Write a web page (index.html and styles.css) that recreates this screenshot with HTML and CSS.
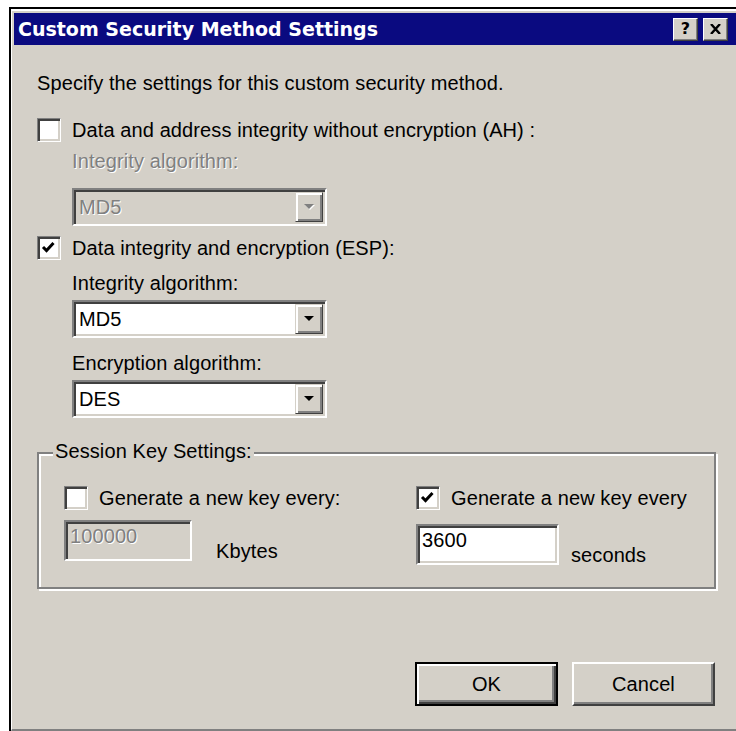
FILE: index.html
```html
<!DOCTYPE html>
<html lang="en">
<head>
<meta charset="utf-8">
<title>Custom Security Method Settings</title>
<link rel="stylesheet" href="styles.css">
</head>
<body>
<div class="window">
  <div class="frame">
    <div class="titlebar">
      <span class="title">Custom Security Method Settings</span>
      <div class="caption-buttons">
        <span class="cap-btn cap-help">?</span>
        <span class="cap-btn">
          <svg class="cap-close" width="11" height="10" viewBox="0 0 11 10"><path d="M1 0 L10 10 M10 0 L1 10" stroke="#000" stroke-width="2.4" fill="none"/></svg>
        </span>
      </div>
    </div>

    <div class="content">
      <p class="intro">Specify the settings for this custom security method.</p>

      <div class="check-row row-ah">
        <span class="checkbox"></span>
        <span>Data and address integrity without encryption (AH) :</span>
      </div>
      <div class="indent">
        <div class="label disabled label-ah">Integrity algorithm:</div>
        <div class="combo disabled combo-ah">
          <span class="combo-value">MD5</span>
          <span class="drop-btn"><svg width="10" height="6" viewBox="0 0 10 6"><polygon points="0,0 10,0 5,5" fill="#808080"/></svg></span>
        </div>
      </div>

      <div class="check-row row-esp">
        <span class="checkbox">
          <svg class="tick" width="22" height="22" viewBox="0 0 22 22"><polyline points="5,10 8.5,13.5 15.5,6" fill="none" stroke="#000" stroke-width="3"/></svg>
        </span>
        <span>Data integrity and encryption (ESP):</span>
      </div>
      <div class="indent">
        <div class="label label-int">Integrity algorithm:</div>
        <div class="combo combo-int">
          <span class="combo-value">MD5</span>
          <span class="drop-btn"><svg width="10" height="6" viewBox="0 0 10 6"><polygon points="0,0 10,0 5,5" fill="#000"/></svg></span>
        </div>
        <div class="label label-enc">Encryption algorithm:</div>
        <div class="combo combo-enc">
          <span class="combo-value">DES</span>
          <span class="drop-btn"><svg width="10" height="6" viewBox="0 0 10 6"><polygon points="0,0 10,0 5,5" fill="#000"/></svg></span>
        </div>
      </div>

      <div class="group">
        <span class="group-legend">Session Key Settings:</span>
        <div class="key-col key-col-size">
          <div class="check-row">
            <span class="checkbox"></span>
            <span>Generate a new key every:</span>
          </div>
          <div class="key-value value-size">
            <span class="edit edit-size disabled">100000</span>
            <span class="unit unit-size">Kbytes</span>
          </div>
        </div>
        <div class="key-col">
          <div class="check-row">
            <span class="checkbox">
              <svg class="tick" width="22" height="22" viewBox="0 0 22 22"><polyline points="5,10 8.5,13.5 15.5,6" fill="none" stroke="#000" stroke-width="3"/></svg>
            </span>
            <span>Generate a new key every</span>
          </div>
          <div class="key-value value-time">
            <span class="edit edit-time">3600</span>
            <span class="unit unit-time">seconds</span>
          </div>
        </div>
      </div>

      <div class="actions">
        <span class="btn btn-default">OK</span>
        <span class="btn">Cancel</span>
      </div>
    </div>
  </div>
</div>
</body>
</html>
```

FILE: styles.css
```css
* {
  box-sizing: border-box;
}

html,
body {
  margin: 0;
}

body {
  width: 736px;
  height: 731px;
  overflow: hidden;
  background: #fff;
  font-family: "Liberation Sans", Arial, sans-serif;
  font-size: 20px;
  line-height: 20px;
  letter-spacing: 0.1px;
  color: #000;
}

/* window frame */
.window {
  margin: 7px 0 0 9px;
  height: 724px;
  border-top: 2px solid #000;
  border-left: 2px solid #000;
}

.frame {
  height: 100%;
  display: flex;
  flex-direction: column;
  background: #d4d0c8;
  border-top: 2px solid #fff;
  border-left: 1px solid #fff;
  border-bottom: 2px solid #808080;
  padding: 2px 0 0 2px;
}

/* caption */
.titlebar {
  height: 32px;
  flex: none;
  display: flex;
  align-items: center;
  justify-content: space-between;
  padding: 0 8px 0 4px;
  background: #0a0a80;
}

.title {
  color: #fff;
  font-family: "DejaVu Sans", sans-serif;
  font-weight: bold;
  font-size: 19px;
  letter-spacing: 0;
}

.caption-buttons {
  display: flex;
  gap: 5px;
}

.cap-btn {
  width: 25px;
  height: 23px;
  display: flex;
  align-items: center;
  justify-content: center;
  background: #d4d0c8;
  border: 1px solid;
  border-color: #fff #404040 #404040 #fff;
  box-shadow: inset -1px -1px 0 #808080;
}

.cap-help {
  font-family: "DejaVu Sans", sans-serif;
  font-weight: bold;
  font-size: 16px;
  line-height: 1;
}

/* shared 3D edges */
.checkbox,
.combo,
.edit {
  border: 2px solid;
  border-color: #808080 #fff #fff #808080;
  box-shadow: inset 2px 2px 0 #404040, inset -2px -2px 0 #d4d0c8;
}

.disabled {
  color: #808080;
  text-shadow: 1px 1px 0 #fff;
}

/* dialog body */
.content {
  flex: 1;
  display: flex;
  flex-direction: column;
  align-items: flex-start;
  padding: 28px 0 0 23px;
}

.intro {
  margin: 0;
  height: 20px;
}

.check-row {
  display: flex;
  align-items: center;
  gap: 11px;
  height: 24px;
}

.row-ah {
  margin-top: 25px;
}

.row-esp {
  margin-top: 10px;
}

.checkbox {
  width: 24px;
  height: 24px;
  flex: none;
  background: #fff;
  border-width: 1px;
}

.tick {
  display: block;
}

.indent {
  display: flex;
  flex-direction: column;
  align-items: flex-start;
  padding-left: 35px;
}

.label {
  height: 20px;
}

.label-ah {
  margin-top: 9px;
}

.label-int {
  margin-top: 13px;
}

.label-enc {
  margin-top: 15px;
}

.combo {
  width: 255px;
  height: 38px;
  display: flex;
  align-items: stretch;
  justify-content: space-between;
  background: #fff;
  padding: 2px 2px 2px 5px;
}

.combo.disabled {
  background: #d4d0c8;
}

.combo-ah {
  margin-top: 17px;
}

.combo-int,
.combo-enc {
  margin-top: 7px;
}

.combo-value {
  align-self: center;
}

.drop-btn {
  width: 28px;
  display: flex;
  align-items: center;
  justify-content: center;
  background: #d4d0c8;
  border: 1px solid;
  border-color: #d4d0c8 #404040 #404040 #d4d0c8;
  box-shadow: inset 2px 2px 0 #fff, inset -2px -2px 0 #808080;
}

.combo.disabled .drop-btn svg {
  filter: drop-shadow(1px 1px 0 #fff);
}

/* session key group */
.group {
  position: relative;
  margin-top: 34px;
  width: 679px;
  height: 137px;
  display: flex;
  padding: 32px 0 0 25px;
  border: 2px solid #808080;
  box-shadow: 2px 2px 0 #fff, inset 2px 2px 0 #fff;
}

.group-legend {
  position: absolute;
  top: -13px;
  left: 14px;
  padding: 0 2px;
  background: #d4d0c8;
}

.key-col {
  display: flex;
  flex-direction: column;
  align-items: flex-start;
}

.key-col-size {
  width: 352px;
}

.key-value {
  display: flex;
  align-items: flex-end;
}

.value-size {
  margin-top: 10px;
}

.value-time {
  margin-top: 14px;
}

.edit {
  height: 41px;
  padding: 4px 0 0 4px;
  background: #fff;
}

.edit.disabled {
  background: #d4d0c8;
}

.edit-size {
  width: 128px;
}

.edit-time {
  width: 143px;
}

.unit-size {
  margin-left: 24px;
}

.unit-time {
  margin-left: 12px;
}

/* buttons */
.actions {
  margin-top: 73px;
  width: 679px;
  display: flex;
  justify-content: flex-end;
  gap: 14px;
  padding-right: 1px;
}

.btn {
  width: 143px;
  height: 44px;
  display: flex;
  align-items: center;
  justify-content: center;
  background: #d4d0c8;
  border: 2px solid;
  border-color: #fff #404040 #404040 #fff;
  box-shadow: inset -2px -2px 0 #808080;
}

.btn-default {
  border-color: #000;
  box-shadow: inset 2px 2px 0 #fff, inset -2px -2px 0 #404040, inset -4px -4px 0 #808080;
}
```
